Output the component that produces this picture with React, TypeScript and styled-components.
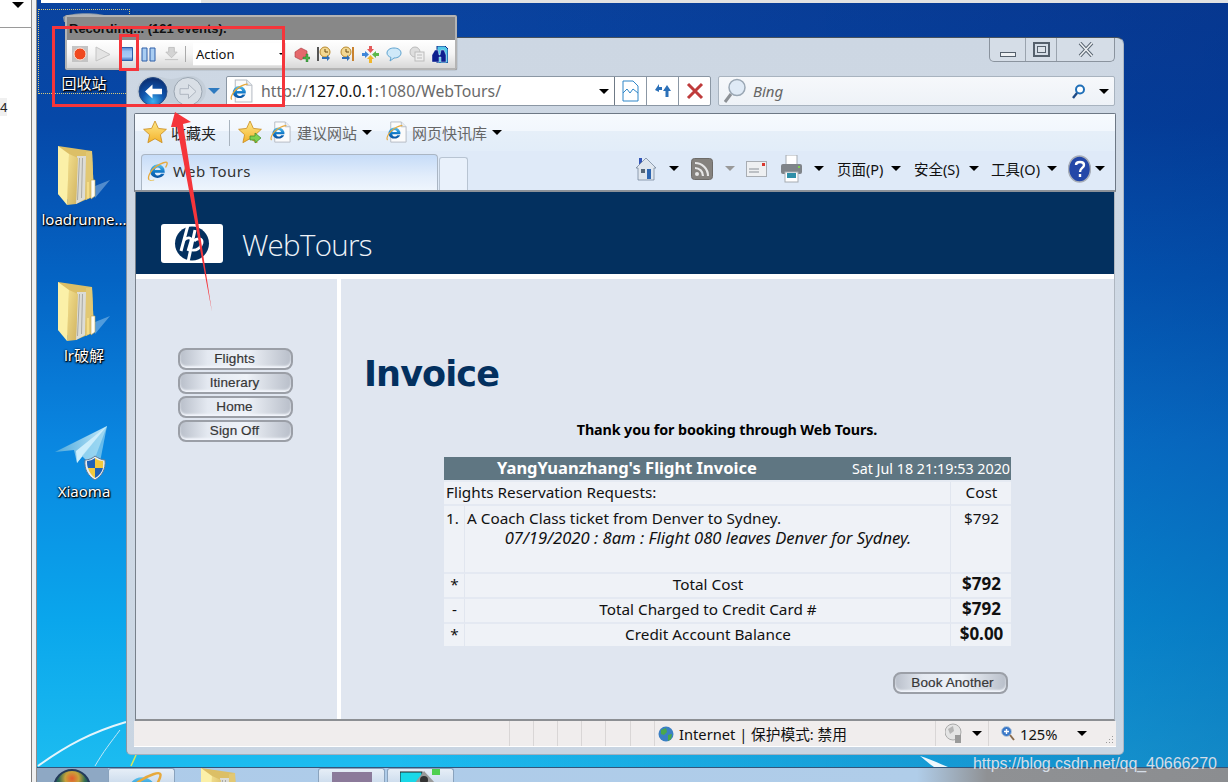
import React from "react";
import styled, { createGlobalStyle } from "styled-components";

const Global = createGlobalStyle`
  html, body { margin: 0; padding: 0; background: #fff; }
  * { box-sizing: border-box; }
`;
const UI = `"Noto Sans", "Noto Sans CJK SC", sans-serif`;

const Screen = styled.div`
  position: relative; width: 1228px; height: 782px; overflow: hidden; display: flex;
  font-family: ${UI}; color: #111;
`;
const Side = styled.aside`
  width: 37px; flex: none; display: flex; flex-direction: column;
  background: #f0f0f0; border-right: 1px solid #8d8d8d;
`;
const SideTop = styled.div`
  width: 32px; height: 28px; background: #fff; border-bottom: 1px solid #9a9a9a; border-right: 1px solid #8d8d8d;
  display: flex; justify-content: flex-end; align-items: flex-start; padding: 2px 7px 0 0;
`;
const SideList = styled.div`
  flex: 1; width: 32px; background: #fff; border-right: 1px solid #7d7d7d; padding-top: 70px;
`;
const SideNum = styled.span`
  display: block; width: 7px; height: 18px; background: #f0f0f0; font: 13px/18px ${UI}; color: #222;
`;
const Desktop = styled.main`
  position: relative; flex: 1; display: flex; flex-direction: column; min-width: 0;
  background:
    linear-gradient(90deg, rgba(0,20,90,0) 30%, rgba(0,30,110,.32) 100%),
    linear-gradient(180deg, #0a439f 0, #0648a8 120px, #0464c4 280px, #0a86e0 440px, #0aa6ec 620px, #1cbcf0 767px);
`;
const DesktopArea = styled.div` flex: 1; `;
const TopStrip = styled.div`
  height: 3px; margin-left: 4px;
  background: linear-gradient(90deg, #fff 160px, #e2e2e2 160px);
`;
const Streaks = styled.svg`
  position: absolute; left: 0; top: 700px;
`;
const DeskIcon = styled.div<{ $x: number; $y: number }>`
  position: absolute; left: ${p => p.$x}px; top: ${p => p.$y}px; width: 92px;
  display: flex; flex-direction: column; align-items: center;
`;
const DeskLabel = styled.span<{ $mt: number }>`
  margin-top: ${p => p.$mt}px; color: #fff; font: 15px/20px ${UI}; white-space: nowrap;
  text-shadow: 0 1px 2px #000, 1px 1px 1px #000, 0 0 2px #002;
`;
const Selection = styled.div`
  position: absolute; left: 1px; top: 9px; width: 92px; height: 85px; border: 1px dotted #d8c878;
  display: flex; flex-direction: column; align-items: center; justify-content: flex-end;
`;
const BinTop = styled.svg` position: absolute; left: 23px; top: 2px; `;

const Recorder = styled.section`
  position: absolute; left: 28px; top: 15px; width: 392px; height: 55px; z-index: 3;
  background: #b4b4b4; padding: 2px; border-radius: 2px; display: flex; flex-direction: column;
  box-shadow: 0 0 1px #444;
`;
const RecTitle = styled.div`
  height: 23px; background: #888; font: bold 13px/18px "Liberation Sans", sans-serif; color: #111;
  padding: 3px 0 0 2px; overflow: hidden;
`;
const RecBar = styled.div`
  flex: 1; display: flex; align-items: center; padding-left: 5px;
  background: linear-gradient(180deg, #fff 0, #f4f4f4 50%, #d8d8d8 100%);
`;
const RecSlot = styled.span<{ $w: number }>`
  width: ${p => p.$w}px; flex: none; display: flex; align-items: center;
`;
const RecSep = styled.i` width: 1px; height: 16px; background: #aaa; margin: 0 7px 0 6px; flex: none; `;
const RecSelect = styled.div`
  width: 93px; height: 23px; flex: none; background: #fff; display: flex; align-items: center;
  justify-content: space-between; padding: 0 2px 0 3px; margin-right: 8px;
  font: 13px/20px ${UI}; color: #111; border-right: 1px solid #e6e6e6; border-bottom: 1px solid #e6e6e6;
`;
const Caret = styled.i<{ $c?: string; $s?: number; $ml?: number }>`
  flex: none; width: 0; height: 0; display: inline-block; margin-left: ${p => p.$ml ?? 0}px;
  border-left: ${p => p.$s ?? 5}px solid transparent; border-right: ${p => p.$s ?? 5}px solid transparent;
  border-top: ${p => p.$s ?? 5}px solid ${p => p.$c ?? "#000"};
`;

const Win = styled.section`
  position: absolute; left: 89px; top: 37px; width: 998px; height: 718px; z-index: 2;
  background: linear-gradient(180deg, #cdd7e3, #d0dae6 60%, #c9d5e2);
  border: 1px solid #3f4f60; border-color: #47525e #aab6c4 #a4b0be #8b96a3; border-radius: 7px 7px 5px 5px;
  padding: 0 7px 7px 7px; display: flex; flex-direction: column;
`;
const WinTop = styled.div` height: 38px; display: flex; justify-content: flex-end; flex: none; `;
const Ctrls = styled.div`
  height: 24px; display: flex; border: 1px solid #8a939e; border-top: 0; border-radius: 0 0 5px 5px; background: #d5dde7;
  margin-right: 1px;
`;
const Ctrl = styled.div<{ $w: number }>`
  width: ${p => p.$w}px; display: flex; align-items: center; justify-content: center; border-left: 1px solid #9aa3ae;
  &:first-child { border-left: 0; }
`;
const MinGlyph = styled.i` width: 16px; height: 5px; margin-top: 9px; background: #eef1f4; border: 1px solid #55606c; `;
const MaxGlyph = styled.i` width: 17px; height: 15px; border: 2px solid #55606c; background: #dde3ea; box-shadow: inset 0 0 0 2px #d5dde7, inset 0 0 0 3px #55606c; `;
const AddrRow = styled.div` height: 30px; flex: none; display: flex; align-items: center; `;
const NavCapsule = styled.div`
  width: 69px; height: 30px; margin-left: 3px; flex: none;
`;
const AddrBox = styled.div`
  margin-left: 6px; width: 485px; height: 30px; flex: none; display: flex; align-items: center;
  background: #fff; border: 1px solid #8b97a4; border-radius: 2px;
`;
const AddrInput = styled.div`
  width: 388px; flex: none; height: 100%; display: flex; align-items: center; padding-left: 2px;
  border-right: 1px solid #6f7a86;
`;
const UrlText = styled.span`
  margin-left: 7px; flex: 1; font: 15.8px/20px ${UI}; color: #6a6a6a; white-space: nowrap;
  b { font-weight: 400; color: #111; }
`;
const AddrBtn = styled.div`
  width: 32px; height: 100%; flex: none; display: flex; align-items: center; justify-content: center;
  border-right: 1px solid #8b97a4; &:last-child { border-right: 0; }
`;
const SearchBox = styled.div`
  margin: 0 1px 0 7px; flex: 1; height: 30px; display: flex; align-items: center; padding: 0 5px 0 4px;
  background: linear-gradient(180deg, #f6f8fb, #eef2f7); border: 1px solid #a8b3bf; border-radius: 2px;
`;
const SearchText = styled.span` margin-left: 6px; flex: 1; font: italic 15px/20px ${UI}; color: #666; `;

const Chrome = styled.div`
  margin-top: 7px; height: 79px; flex: none; display: flex; flex-direction: column;
  border: 1px solid #6d7885; border-bottom: 2px solid #8c9198; border-radius: 2px 2px 0 0;
`;
const FavRow = styled.div`
  height: 37px; flex: none; display: flex; align-items: center; padding-left: 8px;
  background: linear-gradient(180deg, #f6fafe 0, #f2f7fd 45%, #e6eff9 46%, #e2edf9 100%);
`;
const FavText = styled.span<{ $ml: number; $c?: string }>`
  margin-left: ${p => p.$ml}px; font: 15px/20px ${UI}; color: ${p => p.$c ?? "#222"}; white-space: nowrap;
`;
const FavSep = styled.i` width: 1px; height: 26px; background: #a9b4bf; margin: 0 8px 0 13px; flex: none; `;
const TabRow = styled.div`
  flex: 1; display: flex; align-items: flex-end; padding-left: 6px; background: #dfeaf8;
`;
const Tab = styled.div`
  width: 297px; height: 36px; flex: none; display: flex; align-items: center; padding: 0 0 3px 4px;
  background: linear-gradient(180deg, #c6dcf8, #e2edfb 60%, #eef5fd); border: 1px solid #aab6c4; border-bottom: 0; border-radius: 4px 4px 0 0;
`;
const TabLabel = styled.span` margin-left: 4px; font: 15px/20px ${UI}; letter-spacing: .4px; color: #333; `;
const NewTab = styled.div`
  width: 29px; height: 33px; flex: none; margin-left: 1px; background: #e9f1fb; border: 1px solid #b8c4d2; border-bottom: 0; border-radius: 3px 3px 0 0;
`;
const Cmd = styled.div`
  flex: 1; align-self: stretch; display: flex; align-items: center; padding: 0 0 4px 168px;
`;
const CmdText = styled.span<{ $ml: number; $w: number }>`
  margin-left: ${p => p.$ml}px; width: ${p => p.$w}px; flex: none; white-space: nowrap; font: 14.5px/20px ${UI}; color: #111;
  padding-top: 1px;
`;
const Slot = styled.span<{ $ml: number }>` margin-left: ${p => p.$ml}px; display: flex; flex: none; `;

const Page = styled.div`
  height: 529px; flex: none; display: flex; flex-direction: column; margin: 0 1px 0 1px; background: #e0e6f0;
  border-left: 1px solid #77808a; border-right: 1px solid #aeb6c0; border-bottom: 2px solid #8c8f93;
`;
const Banner = styled.header`
  height: 82px; flex: none; background: #03305f; display: flex; align-items: flex-start; padding: 32px 0 0 25px;
`;
const Brand = styled.span`
  margin: 1px 0 0 19px; color: #eef3f8; font: 300 29.5px/40px "Open Sans", sans-serif; letter-spacing: -.7px;
`;
const BodyRow = styled.div` flex: 1; display: flex; border-top: 5px solid #fff; min-height: 0; `;
const Nav = styled.nav`
  flex: none; border-right: 4px solid #fff; width: 205px; display: flex; flex-direction: column;
  gap: 2px; padding: 69px 0 0 42px;
`;
const NavBtn = styled.div`
  width: 115px; height: 22px; flex: none; border: 2.5px solid #9b9fa7; border-radius: 8px;
  background: linear-gradient(90deg, #b9bfca 0, #e4e9f1 25%, #eef2f8 60%, #b9bfca 100%);
  box-shadow: inset 0 -2px 2px #f2f5fb;
  display: flex; align-items: center; justify-content: center; padding: 0 2px 0 0;
  font: 13.5px/16px "Liberation Sans", sans-serif; color: #333; letter-spacing: .1px;
  -webkit-text-stroke: .2px #444;
`;
const BookBtn = styled(NavBtn)` padding: 0 0 0 4px; `;
const Content = styled.div`
  flex: 1; display: flex; flex-direction: column; padding: 74px 0 0 23px; min-width: 0;
`;
const H1 = styled.h1`
  margin: 0; font: bold 35px/42px "DejaVu Sans", sans-serif; color: #03305f; letter-spacing: -.9px;
`;
const Thanks = styled.p`
  margin: 25px 0 0 -24px; text-align: center; font: bold 14.3px/20px "Noto Sans", sans-serif; color: #000; letter-spacing: -.1px;
`;
const Inv = styled.table`
  margin: 17px 0 0 80px; width: 567px; table-layout: fixed; border-collapse: separate; border-spacing: 0;
  background: #eff2f7; font: 15.3px/20px "Noto Sans", sans-serif; color: #111;
`;
const HeadCell = styled.th`
  height: 25px; padding: 0 1px 0 0; background: #5f7682; background-clip: padding-box; color: #fff; border-bottom: 2px solid #e6ebf3;
  font-weight: 400; text-align: right; font-size: 14.3px; line-height: 23px; white-space: nowrap;
`;
const HeadTitle = styled.span`
  float: left; margin: -1px 0 0 53px; font: bold 16.5px/23px "Noto Sans", sans-serif;
`;
const Td = styled.td<{ $h: number; $al?: string; $va?: string; $bold?: boolean; $last?: boolean }>`
  height: ${p => p.$h}px; padding: ${p => (p.$va === "top" ? "2px 1px 0 2px" : "0 1px 3px 2px")}; text-align: ${p => p.$al ?? "left"};
  vertical-align: ${p => p.$va ?? "middle"}; font-weight: ${p => (p.$bold ? 700 : 400)}; font-size: ${p => (p.$bold ? "17px" : "15.3px")};
  line-height: ${p => (p.$va === "top" ? "20px" : "18px")};
  border-bottom: ${p => (p.$last ? 0 : "2px solid #e4e9f2")}; border-right: 1px solid #e1e6ef;
  &:last-child { border-right: 0; }
`;
const Flight = styled.em` display: block; text-align: center; font-size: 16.6px; white-space: nowrap; `;
const BookWrap = styled.div` margin: 26px 0 0 529px; `;

const Status = styled.footer`
  height: 26px; flex: none; display: flex; align-items: center; background: #f0eded; border-bottom: 1px solid #fff;
`;
const Cell = styled.div<{ $w: number }>`
  width: ${p => p.$w}px; flex: none; height: 100%; display: flex; align-items: center; border-left: 1px solid #d9d6d6; padding-left: 3px;
  font: 14.7px/20px ${UI}; color: #111; white-space: nowrap;
`;
const Spacer = styled.div` width: 375px; flex: none; `;
const Grip = styled.svg` margin-left: auto; margin-right: 2px; align-self: flex-end; `;

const Taskbar = styled.footer`
  height: 15px; flex: none; display: flex; overflow: hidden; border-top: 1px solid #34557a;
  background: linear-gradient(90deg, #adcbe9 0, #b0cde9 880px, #8f9194 950px, #8b8d90 100%);
`;
const StartZone = styled.div`
  width: 71px; flex: none; background: #8ea8c4; display: flex; justify-content: center; padding-top: 1px;
`;
const Orb = styled.div`
  width: 38px; height: 38px; flex: none; margin-left: -2px; border-radius: 50%; border: 2px solid #233a5a;
  background: radial-gradient(circle at 50% 22%, #e45b2e 0, #c9a23a 22%, #2c6a52 42%, #12386a 70%);
`;
const TaskBtn = styled.div<{ $w: number; $ml?: number; $plain?: boolean }>`
  width: ${p => p.$w}px; flex: none; margin-left: ${p => p.$ml ?? 0}px; display: flex; justify-content: center;
  ${p => (p.$plain ? "" : "background: linear-gradient(180deg,#e6eef7,#cfdeee); border: 1px solid #8aa3bd; border-bottom: 0; border-radius: 3px 3px 0 0;")}
`;
const Mauve = styled.i` display: block; width: 40px; height: 15px; margin-top: 3px; background: #8b7a9a; `;
const Watermark = styled.span`
  position: absolute; left: 936px; top: 754px; z-index: 4; font: 16px/20px "Liberation Sans", sans-serif; color: #d5dde6; letter-spacing: -.05px;
`;
const RedBox = styled.div<{ $x: number; $y: number; $w: number; $h: number }>`
  position: absolute; z-index: 6; left: ${p => p.$x}px; top: ${p => p.$y}px; width: ${p => p.$w}px; height: ${p => p.$h}px;
  border: 3px solid #f5353b; pointer-events: none;
`;
const ArrowLayer = styled.svg` position: absolute; left: 0; top: 0; z-index: 6; pointer-events: none; `;
const Defs = styled.svg` position: absolute; width: 0; height: 0; `;

const Ie = ({ size = 24 }: { size?: number }) => (
  <svg width={size} height={size} viewBox="0 0 24 24">
    <path fillRule="evenodd" fill="url(#ieBlue)" d="M4.6 13.4a7.6 7.6 0 1 1 15-.2H9.2c.3 3.4 4.9 3.9 6.5 1.2h3.6c-2.5 6.2-13.6 5.5-14.7-1zM9.2 10.4h6.1c-.5-3.6-5.6-3.6-6.1 0z" />
    <path fill="none" stroke="#e7a93b" strokeWidth="1.4" d="M3.2 20.6C.8 17.6 6 9.6 11 6.4c5-3.2 10.4-5 11-3.6.5 1.2-.6 3.2-1.6 5" />
    <path fill="none" stroke="#e7c25b" strokeWidth="1" d="M3.2 20.6c1 1.2 3.2 1 5.4.2" />
  </svg>
);
const IeDoc = ({ size = 24 }: { size?: number }) => (
  <svg width={size} height={size} viewBox="0 0 24 24">
    <path d="M6 1h11l5 5v16H6z" fill="#fbfbfb" stroke="#b6bcc4" />
    <path d="M17 1v5h5" fill="#e9edf1" stroke="#b6bcc4" />
    <g transform="translate(0 3) scale(.82)">
      <path fillRule="evenodd" fill="url(#ieBlue)" d="M4.6 13.4a7.6 7.6 0 1 1 15-.2H9.2c.3 3.4 4.9 3.9 6.5 1.2h3.6c-2.5 6.2-13.6 5.5-14.7-1zM9.2 10.4h6.1c-.5-3.6-5.6-3.6-6.1 0z" />
      <path fill="none" stroke="#e7a93b" strokeWidth="1.5" d="M3.2 20.6C.8 17.6 6 9.6 11 6.4c5-3.2 10.4-5 11-3.6" />
    </g>
  </svg>
);
const Star = ({ plus }: { plus?: boolean }) => (
  <svg width="24" height="25" viewBox="0 0 24 25">
    <path d="M12 1l3.4 7.4 8 .9-6 5.4 1.7 8L12 18.7l-7.1 4 1.7-8-6-5.4 8-.9z" fill="url(#star)" stroke="#c98a1a" strokeWidth=".8" />
    {plus && <path d="M12 16h5v-3l6 5-6 5v-3h-5z" fill="#7ed04f" stroke="#3a8a2a" strokeWidth=".7" />}
  </svg>
);
const Folder = () => (
  <svg width="52" height="63" viewBox="0 0 52 63">
    <path d="M37 40l15-6-15 18z" fill="#dff3fc" opacity=".35" />
    <path d="M0 0l34 5 2 45-18 8L0 48z" fill="#dcbf66" />
    <path d="M19 10h9l-1 43-9 5z" fill="#dcdcd6" />
    <path d="M21 12l1 0-2 42h-1zM24 12h1l-1 40h-1z" fill="#a9a9a4" />
    <path d="M11 8l9 4-2 46-9 1z" fill="url(#fold)" />
    <path d="M0 0l11 8-2 51-9-11z" fill="#fbf0a8" />
    <path d="M28 6l6-1 2 45-8 4z" fill="#e2c873" />
    <path d="M33 34h4v16l-4 3z" fill="#fdfdf6" stroke="#c9a94e" strokeWidth=".6" />
    <path d="M29 36h2v16h-2z" fill="#f5dc86" />
  </svg>
);
const Plane = () => (
  <svg width="60" height="56" viewBox="0 0 60 56">
    <path d="M1 28L53 2 38 42 28 32l-5 7-3-13z" fill="url(#plane)" />
    <path d="M53 2L23 39l-1-12z" fill="#cdeefc" />
    <path d="M53 2L28 32l18 6z" fill="#8fd2ef" opacity=".7" />
    <path d="M31 36c4 0 8-2 10-4 3 2 7 4 10 4 1 9-3 16-10 20-7-4-11-11-10-20z" fill="#e8eef3" stroke="#5d7a95" />
    <path d="M41 34c-2 2-6 3-8 3 0 2 0 5 1 7h7zM41 44v10c4-2 7-6 8-10z" fill="#1e62b8" />
    <path d="M41 34c2 2 5 3 8 3 .4 2 0 5 0 7h-8zM41 44v10c-3-2-6-6-7-10z" fill="#f3c93c" />
  </svg>
);
const Rec = () => (
  <svg width="16" height="16" viewBox="0 0 16 16">
    <rect width="16" height="16" fill="#c4c4c4" />
    <circle cx="8" cy="8" r="6" fill="#f0491f" stroke="#fbe3d8" />
  </svg>
);
const Ico = ({ d, fill, stroke, w = 16, h = 16, sw = 1 }: { d: string; fill: string; stroke?: string; w?: number; h?: number; sw?: number }) => (
  <svg width={w} height={h} viewBox={`0 0 ${w} ${h}`}><path d={d} fill={fill} stroke={stroke} strokeWidth={sw} /></svg>
);
const Bricks = () => (
  <svg width="16" height="16" viewBox="0 0 16 16">
    <path d="M1 6l6-4 6 3v5l-6 4-6-3z" fill="#e4686c" stroke="#a8383c" strokeWidth=".6" />
    <path d="M9 11h3V8h2v3h2v2h-2v3h-2v-3H9z" fill="#4bb04b" stroke="#1e6a1e" strokeWidth=".4" />
  </svg>
);
const Clock = ({ flip }: { flip?: boolean }) => (
  <svg width="16" height="16" viewBox="0 0 16 16">
    <rect x={flip ? 13 : 0} y="1" width="2" height="14" fill={flip ? "#c9822e" : "#555"} />
    <circle cx={flip ? 7 : 8} cy="6" r="5" fill="#f2d893" stroke="#b98a2e" />
    <path d={flip ? "M7 3v3h3" : "M8 3v3h3"} fill="none" stroke="#6a4a10" />
    <path d={flip ? "M3 11h5V9l3 3-3 3v-2H3z" : "M5 11h5V9l3 3-3 3v-2H5z"} fill="#2e6fb8" />
  </svg>
);
const Merge = () => (
  <svg width="17" height="17" viewBox="0 0 17 17">
    <path d="M7 0h3v3h2L8.500 7 5 3h2z" fill="#e35a5a" />
    <path d="M0 7h3V5l4 3.500-4 3.500v-2H0z" fill="#3f86d8" />
    <path d="M17 7h-3V5l-4 3.500 4 3.500v-2h3z" fill="#5cb84c" />
    <path d="M7 17h3v-4h2l-3.500-4L5 13h2z" fill="#f1b62c" />
  </svg>
);
const Bubble = () => (
  <svg width="16" height="15" viewBox="0 0 16 15">
    <path d="M8 1c4 0 7 2 7 5s-3 5-7 5l-4 3 1-3.500C2.500 9.500 1 8 1 6c0-3 3-5 7-5z" fill="#cfe9f9" stroke="#5fa3cf" />
  </svg>
);
const Ghost = () => (
  <svg width="16" height="16" viewBox="0 0 16 16">
    <circle cx="6" cy="6" r="5" fill="#dedede" stroke="#bbb" />
    <rect x="6" y="6" width="9" height="9" fill="#eee" stroke="#bbb" />
    <path d="M8 9h5M8 12h5" stroke="#bbb" />
  </svg>
);
const Binoc = () => (
  <svg width="17" height="17" viewBox="0 0 17 17">
    <path d="M6 0h8l3 3v14H6z" fill="#55c8e8" stroke="#0a2a8c" />
    <path d="M1 16V9l3-5h3l1 5h1l1-5h3l2 5v7h-5V11H8v5z" fill="#0c1f8f" stroke="#fff" strokeWidth=".4" />
  </svg>
);
const Back = () => (
  <svg width="69" height="30" viewBox="0 0 69 30">
    <path d="M15 0c10 0 12 3 19 3s9-3 20-3c8 0 15 7 15 15s-7 15-15 15c-11 0-13-3-20-3s-9 3-19 3C7 30 0 23 0 15S7 0 15 0z" fill="#c4ced9" />
    <circle cx="16" cy="15.500" r="14" fill="url(#back)" stroke="#2a4f86" />
    <path d="M8 15.500l7.500-7v4.200H25v5.600h-9.500v4.200z" fill="#fff" />
    <circle cx="51" cy="15.500" r="14" fill="#d9dfe6" stroke="#9ba6b2" />
    <path d="M59 15.500l-7.500-7v4.200H43v5.600h8.500v4.200z" fill="#dfe4ea" stroke="#aeb6c0" />
  </svg>
);
const Compat = () => (
  <svg width="17" height="22" viewBox="0 0 17 22">
    <path d="M1 1h10l5 5v15H1z" fill="#fff" stroke="#2e86c8" />
    <path d="M1 13l4-4 3 4 3-4 5 4" fill="none" stroke="#2e86c8" />
  </svg>
);
const Refresh = () => (
  <svg width="18" height="18" viewBox="0 0 18 18">
    <path d="M1 8l4-6v3h3v3H5v2z" fill="#2b70b8" />
    <path d="M9 9l4-6 4 6h-2.500v6h-3V9z" fill="#2b70b8" />
  </svg>
);
const RedX = () => (
  <svg width="18" height="18" viewBox="0 0 18 18">
    <path d="M2 2l14 14M16 2L2 16" stroke="#bf3b3b" strokeWidth="3" />
  </svg>
);
const Close = () => (
  <svg width="16" height="15" viewBox="0 0 16 15">
    <path d="M2 1l12 13M14 1L2 14" stroke="#5a6672" strokeWidth="3.500" />
    <path d="M2 1l12 13M14 1L2 14" stroke="#eef1f4" strokeWidth="1.500" />
  </svg>
);
const BigGlass = () => (
  <svg width="24" height="26" viewBox="0 0 24 26">
    <circle cx="14" cy="9.500" r="8" fill="#dfeaf6" stroke="#9aa7b4" strokeWidth="1.500" />
    <path d="M8 16L2 24" stroke="#8d9196" strokeWidth="3" />
  </svg>
);
const SmallGlass = () => (
  <svg width="15" height="15" viewBox="0 0 15 15">
    <circle cx="9" cy="5.500" r="4" fill="#fff" stroke="#1f6fb8" strokeWidth="2" />
    <path d="M6 9l-4 5" stroke="#1d4a86" strokeWidth="2.400" />
  </svg>
);
const Home = () => (
  <svg width="20" height="24" viewBox="0 0 20 24">
    <path d="M3 1h3v4l-3 3z" fill="#3355b5" />
    <path d="M10 1l10 10h-2v12H2V11H0z" fill="#dfe6ee" stroke="#6b7d92" strokeWidth=".7" />
    <rect x="5" y="12" width="4" height="4" fill="#567" />
    <rect x="11" y="12" width="4" height="10" fill="#2e66b0" />
  </svg>
);
const Rss = () => (
  <svg width="22" height="22" viewBox="0 0 22 22">
    <rect x=".5" y=".5" width="21" height="21" rx="3" fill="#85827e" stroke="#6d6b68" />
    <circle cx="6" cy="16" r="2" fill="#e6e6e6" />
    <path d="M4 10a8 8 0 0 1 8 8M4 5a13 13 0 0 1 13 13" fill="none" stroke="#e6e6e6" strokeWidth="2.200" />
  </svg>
);
const Mail = () => (
  <svg width="21" height="16" viewBox="0 0 21 16">
    <rect x=".5" y=".5" width="20" height="15" fill="#eef0f2" stroke="#a8adb3" />
    <path d="M3 8h10M3 11h10" stroke="#8a9097" />
    <rect x="16" y="2" width="3" height="3" fill="#d9382f" />
  </svg>
);
const Printer = () => (
  <svg width="23" height="28" viewBox="0 0 23 28">
    <rect x="6" y="0" width="11" height="10" fill="#fff" stroke="#a6abb1" />
    <rect x="1" y="9" width="21" height="10" rx="2" fill="#7f8489" />
    <rect x="5" y="17" width="13" height="10" fill="#fff" stroke="#a6abb1" />
    <rect x="7" y="18" width="9" height="5" fill="#2f8fa8" />
    <rect x="18" y="11" width="2" height="2" fill="#7ed04f" />
  </svg>
);
const Help = () => (
  <svg width="23" height="28" viewBox="0 0 23 28">
    <ellipse cx="11.500" cy="14" rx="11" ry="13" fill="#2447a8" stroke="#a8aeb8" strokeWidth="1.500" />
    <path d="M8 10c0-4 8-4 8 0 0 3-4 3-4 7M12 19v3" fill="none" stroke="#fff" strokeWidth="2.400" />
  </svg>
);
const Globe = () => (
  <svg width="16" height="16" viewBox="0 0 16 16">
    <circle cx="8" cy="8" r="7.500" fill="#3a7fc4" />
    <path d="M3 4l5-2 1 4-3 3-3-1zM10 9l4-1-1 5-3 2z" fill="#4aa84c" />
  </svg>
);
const LockGlobe = () => (
  <svg width="18" height="22" viewBox="0 0 18 22">
    <circle cx="8" cy="9" r="8" fill="#e4e4e4" stroke="#aaa" />
    <path d="M3 6l5-3 1 5-4 3z" fill="#b5b5b5" />
    <rect x="10" y="12" width="6" height="8" fill="#9a9a9a" />
  </svg>
);
const Zoom = () => (
  <svg width="14" height="15" viewBox="0 0 14 15">
    <circle cx="5.500" cy="5.500" r="5" fill="#3a78c8" stroke="#bcd" />
    <path d="M3 5.500h5M5.500 3v5" stroke="#fff" strokeWidth="1.400" />
    <path d="M9 9l4 5" stroke="#8a6a4a" strokeWidth="2" />
  </svg>
);
const HpMark = () => (
  <svg width="62" height="39" viewBox="0 0 62 39">
    <rect width="62" height="39" rx="3" fill="#fff" />
    <circle cx="31" cy="19.500" r="17" fill="#03305f" />
    <path d="M27 1l-7 26M34 6l-7 32" stroke="#fff" strokeWidth="3" />
    <path d="M23 16c3-3 8-3 7 1l-3 10M33 17c3-3 9-3 8 2-1 5-6 8-10 7" fill="none" stroke="#fff" strokeWidth="2.800" />
  </svg>
);

export default function App() {
  return (
    <>
      <Global />
      <Defs aria-hidden="true">
        <defs>
          <linearGradient id="ieBlue" x1="0" y1="0" x2="0" y2="1">
            <stop offset="0" stopColor="#5cc4ee" /><stop offset=".55" stopColor="#1178c8" /><stop offset="1" stopColor="#0a4f9c" />
          </linearGradient>
          <linearGradient id="star" x1="0" y1="0" x2="0" y2="1">
            <stop offset="0" stopColor="#fde88a" /><stop offset="1" stopColor="#f4b22a" />
          </linearGradient>
          <linearGradient id="fold" x1="0" y1="0" x2="1" y2="1">
            <stop offset="0" stopColor="#f4e08e" /><stop offset="1" stopColor="#cfb260" />
          </linearGradient>
          <linearGradient id="plane" x1="0" y1="0" x2="1" y2="0">
            <stop offset="0" stopColor="#4ea9dc" /><stop offset="1" stopColor="#bfe8fa" />
          </linearGradient>
          <linearGradient id="stopBlue" x1="0" y1="0" x2="0" y2="1">
            <stop offset="0" stopColor="#4f86d0" /><stop offset=".3" stopColor="#9cc4f2" /><stop offset=".7" stopColor="#a8ccf4" /><stop offset="1" stopColor="#3a6fc0" />
          </linearGradient>
          <radialGradient id="back" cx=".5" cy=".85" r=".8">
            <stop offset="0" stopColor="#3fb0ee" /><stop offset=".5" stopColor="#0f55ad" /><stop offset="1" stopColor="#0a2f74" />
          </radialGradient>
        </defs>
      </Defs>
      <Screen>
        <Side>
          <SideTop><Caret $s={6} /></SideTop>
          <SideList><SideNum>4</SideNum></SideList>
        </Side>
        <Desktop>
          <TopStrip />
          <Streaks width="1191" height="68" viewBox="0 700 1191 68">
            <path d="M1 766C30 745 55 732 89 722" fill="none" stroke="#e4f5fc" strokeWidth="2" />
            <path d="M58 766C66 752 74 742 83 730" fill="none" stroke="#bfe8f8" strokeWidth="1" />
            <path d="M94 766l5-11" stroke="#d8e85a" strokeWidth="1.500" />
            <path d="M883 756c10 3 18 7 28 11h-14c-6-4-10-8-14-11z" fill="#eef8fd" />
          </Streaks>
          <DesktopArea />

          <Selection>
            <BinTop width="48" height="10" viewBox="0 0 48 10">
              <path d="M1 5C8 0 40 0 47 5L46 10H2z" fill="#8e9aa8" />
              <path d="M3 5c8-3 34-3 42 0" fill="none" stroke="#c9d0d8" />
            </BinTop>
            <DeskLabel $mt={0}>回收站</DeskLabel>
          </Selection>
          <DeskIcon $x={1} $y={146}><Folder /><DeskLabel $mt={0}>loadrunne...</DeskLabel></DeskIcon>
          <DeskIcon $x={1} $y={282}><Folder /><DeskLabel $mt={0}>lr破解</DeskLabel></DeskIcon>
          <DeskIcon $x={1} $y={424}><Plane /><DeskLabel $mt={1}>Xiaoma</DeskLabel></DeskIcon>

          <Win>
            <WinTop>
              <Ctrls>
                <Ctrl $w={35}><MinGlyph /></Ctrl>
                <Ctrl $w={31}><MaxGlyph /></Ctrl>
                <Ctrl $w={58}><Close /></Ctrl>
              </Ctrls>
            </WinTop>
            <AddrRow>
              <NavCapsule><Back /></NavCapsule>
              <Slot $ml={2}><Caret $c="#2e7ac0" $s={6} /></Slot>
              <AddrBox>
                <AddrInput>
                  <IeDoc size={25} />
                  <UrlText>http://<b>127.0.0.1</b>:1080/WebTours/</UrlText>
                  <Caret $s={5} />
                  <Slot $ml={5} />
                </AddrInput>
                <AddrBtn><Compat /></AddrBtn>
                <AddrBtn><Refresh /></AddrBtn>
                <AddrBtn><RedX /></AddrBtn>
              </AddrBox>
              <SearchBox>
                <BigGlass />
                <SearchText>Bing</SearchText>
                <SmallGlass />
                <Slot $ml={13}><Caret $s={5} /></Slot>
              </SearchBox>
            </AddrRow>
            <Chrome>
              <FavRow>
                <Star />
                <FavText $ml={4}>收藏夹</FavText>
                <FavSep />
                <Star plus />
                <Slot $ml={7}><IeDoc size={23} /></Slot>
                <FavText $ml={5} $c="#666">建议网站</FavText>
                <Caret $ml={5} />
                <Slot $ml={13}><IeDoc size={23} /></Slot>
                <FavText $ml={4} $c="#666">网页快讯库</FavText>
                <Caret $ml={5} />
              </FavRow>
              <TabRow>
                <Tab><Ie size={23} /><TabLabel>Web Tours</TabLabel></Tab>
                <NewTab />
                <Cmd>
                  <Home />
                  <Caret $ml={13} />
                  <Slot $ml={12}><Rss /></Slot>
                  <Caret $ml={12} $c="#999" />
                  <Slot $ml={11}><Mail /></Slot>
                  <Slot $ml={13}><Printer /></Slot>
                  <Caret $ml={11} />
                  <CmdText $ml={13} $w={49}>页面(P)</CmdText>
                  <Caret $ml={5} />
                  <CmdText $ml={13} $w={51}>安全(S)</CmdText>
                  <Caret $ml={4} />
                  <CmdText $ml={12} $w={52}>工具(O)</CmdText>
                  <Caret $ml={4} />
                  <Slot $ml={11}><Help /></Slot>
                  <Caret $ml={4} />
                </Cmd>
              </TabRow>
            </Chrome>
            <Page>
              <Banner>
                <HpMark />
                <Brand>WebTours</Brand>
              </Banner>
              <BodyRow>
                <Nav>
                  <NavBtn>Flights</NavBtn>
                  <NavBtn>Itinerary</NavBtn>
                  <NavBtn>Home</NavBtn>
                  <NavBtn>Sign Off</NavBtn>
                </Nav>
                <Content>
                  <H1>Invoice</H1>
                  <Thanks>Thank you for booking through Web Tours.</Thanks>
                  <Inv>
                    <colgroup><col width="21" /><col width="486" /><col width="60" /></colgroup>
                    <tbody>
                      <tr>
                        <HeadCell colSpan={3}><HeadTitle>YangYuanzhang's Flight Invoice</HeadTitle>Sat Jul 18 21:19:53 2020</HeadCell>
                      </tr>
                      <tr>
                        <Td $h={24} colSpan={2}>Flights Reservation Requests:</Td>
                        <Td $h={24} $al="center">Cost</Td>
                      </tr>
                      <tr>
                        <Td $h={68} $va="top">1.</Td>
                        <Td $h={68} $va="top">A Coach Class ticket from Denver to Sydney.<Flight>07/19/2020 : 8am : Flight 080 leaves Denver for Sydney.</Flight></Td>
                        <Td $h={68} $va="top" $al="center">$792</Td>
                      </tr>
                      <tr>
                        <Td $h={25} $al="center">*</Td>
                        <Td $h={25} $al="center">Total Cost</Td>
                        <Td $h={25} $al="center" $bold>$792</Td>
                      </tr>
                      <tr>
                        <Td $h={25} $al="center">-</Td>
                        <Td $h={25} $al="center">Total Charged to Credit Card #</Td>
                        <Td $h={25} $al="center" $bold>$792</Td>
                      </tr>
                      <tr>
                        <Td $h={22} $al="center" $last>*</Td>
                        <Td $h={22} $al="center" $last>Credit Account Balance</Td>
                        <Td $h={22} $al="center" $bold $last>$0.00</Td>
                      </tr>
                    </tbody>
                  </Inv>
                  <BookWrap><BookBtn>Book Another</BookBtn></BookWrap>
                </Content>
              </BodyRow>
            </Page>
            <Status>
              <Spacer />
              <Cell $w={24} /><Cell $w={24} /><Cell $w={24} /><Cell $w={24} /><Cell $w={25} /><Cell $w={24} />
              <Cell $w={281}><Globe /><Slot $ml={5}>Internet | 保护模式: 禁用</Slot></Cell>
              <Cell $w={53}><Slot $ml={6}><LockGlobe /></Slot><Caret $ml={9} /></Cell>
              <Cell $w={128}>
                <Slot $ml={9}><Zoom /></Slot>
                <Slot $ml={5}>125%</Slot>
                <Caret $ml={20} />
                <Grip width="12" height="12" viewBox="0 0 12 12">
                  <path d="M10 2h1v1h-1zM7 5h1v1H7zM10 5h1v1h-1zM4 8h1v1H4zM7 8h1v1H7zM10 8h1v1h-1z" fill="#9a9a9a" />
                </Grip>
              </Cell>
            </Status>
          </Win>

          <Recorder>
            <RecTitle>Recording... (121 events).</RecTitle>
            <RecBar>
              <RecSlot $w={23}><Rec /></RecSlot>
              <RecSlot $w={24}><Ico d="M1 1l14 7.500L1 15z" fill="#e4e4e4" stroke="#c4c4c4" /></RecSlot>
              <RecSlot $w={22}><Ico w={14} h={14} d="M.5.500h13v13H.5z" fill="url(#stopBlue)" stroke="#2e5fa8" /></RecSlot>
              <RecSlot $w={23}><Ico w={15} h={15} d="M1 1h5v13H1zM9 1h5v13H9z" fill="#a9cdf2" stroke="#2e5fa8" /></RecSlot>
              <RecSlot $w={15}><Ico d="M5 1h6v5h3l-6 6-6-6h3zM1 14h14" fill="#d4d4d4" stroke="#c0c0c0" /></RecSlot>
              <RecSep />
              <RecSelect>Action<Caret $s={2} $ml={0} /></RecSelect>
              <RecSlot $w={23}><Bricks /></RecSlot>
              <RecSlot $w={22}><Clock /></RecSlot>
              <RecSlot $w={23}><Clock flip /></RecSlot>
              <RecSlot $w={24}><Merge /></RecSlot>
              <RecSlot $w={23}><Bubble /></RecSlot>
              <RecSlot $w={22}><Ghost /></RecSlot>
              <RecSlot $w={17}><Binoc /></RecSlot>
            </RecBar>
          </Recorder>
          <Taskbar>
            <StartZone><Orb /></StartZone>
            <TaskBtn $w={67}><Ie size={44} /></TaskBtn>
            <TaskBtn $w={143} $plain>
              <Slot $ml={-40}><Folder /></Slot>
            </TaskBtn>
            <TaskBtn $w={67}><Mauve /></TaskBtn>
            <TaskBtn $w={67} $ml={2}>
              <svg width="42" height="15" viewBox="0 0 42 15">
                <rect x="0" y="3" width="22" height="12" fill="#19d8e8" stroke="#222" />
                <path d="M14 15l10-13 12 13z" fill="#9a9a9a" /><circle cx="24" cy="11" r="4" fill="#333" />
                <rect x="32" y="0" width="8" height="6" fill="#4fd04f" />
              </svg>
            </TaskBtn>
          </Taskbar>
          <Watermark>https://blog.csdn.net/qq_40666270</Watermark>
        </Desktop>

        <RedBox $x={52} $y={26} $w={233} $h={81} />
        <RedBox $x={119} $y={34} $w={20} $h={37} />
        <ArrowLayer width="1228" height="782" viewBox="0 0 1228 782">
          <polygon points="175,112 191,122 183,124 212,312 177,127 171,127" fill="#f5353b" />
        </ArrowLayer>
      </Screen>
    </>
  );
}
